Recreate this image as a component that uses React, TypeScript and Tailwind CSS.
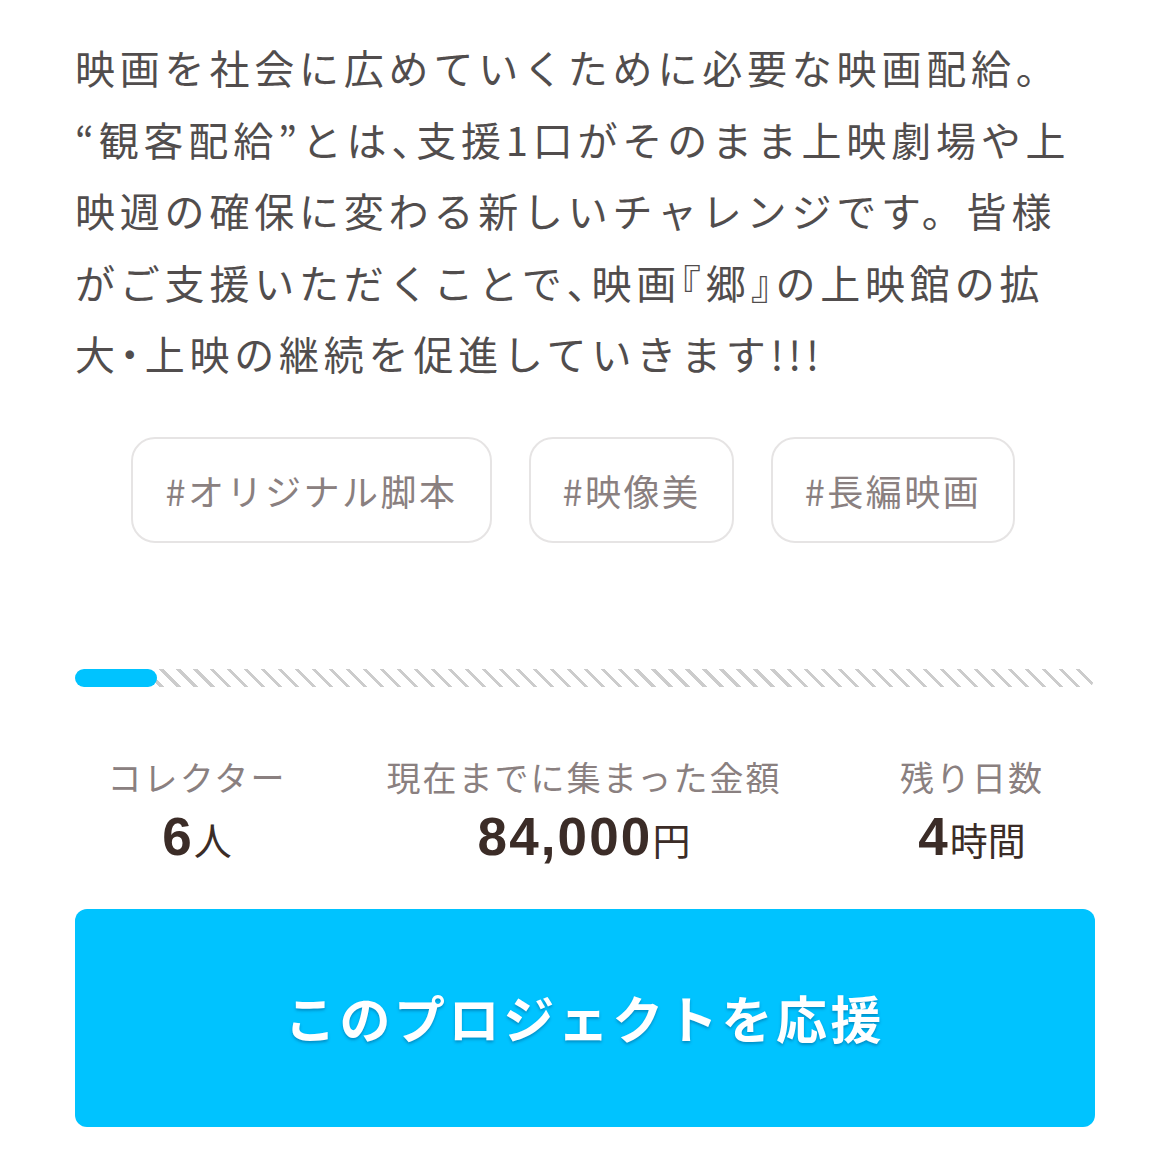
import type { ReactNode } from 'react';

// half-width punctuation, like the palt spacing in the shot
const P = ({ c }: { c: string }) => (
  <span className="[font-feature-settings:'halt']">{c}</span>
);

const lines: ReactNode[] = [
  '映画を社会に広めていくために必要な映画配給。',
  <>“観客配給”とは<P c="、" />支援1口がそのまま上映劇場や上</>,
  '映週の確保に変わる新しいチャレンジです。皆様',
  <>がご支援いただくことで<P c="、" />映画<P c="『" />郷<P c="』" />の上映館の拡</>,
  <>大<P c="・" />上映の継続を促進していきます!!!</>,
];

const tags = [
  { label: '#オリジナル脚本', w: 'w-[361px]' },
  { label: '#映像美', w: 'w-[205px]' },
  { label: '#長編映画', w: 'w-[244px]' },
];

export default function App() {
  return (
    <div className="w-[1170px] min-h-[1167px] bg-white px-[75px] pt-[32px] font-['Noto_Sans_CJK_JP',sans-serif]">
      {/* Description */}
      <p className="text-[40px] leading-[71.5px] tracking-[0.12em] text-[#514d4d] whitespace-nowrap">
        {lines.map((l, i) => (
          <span key={i} className="block">{l}</span>
        ))}
      </p>

      {/* Tags */}
      <div className="mt-[47px] ml-[56px] flex gap-[37px]">
        {tags.map((t) => (
          <div
            key={t.label}
            className={`${t.w} h-[106px] flex items-center justify-center rounded-[24px] border-2 border-[#e6e4e4] text-[36px] tracking-[0.07em] text-[#8a8080]`}
          >
            {t.label}
          </div>
        ))}
      </div>

      {/* Progress */}
      <div className="mt-[126px] h-[18px] rounded-full bg-[repeating-linear-gradient(45deg,#cccccc_0_3px,transparent_3px_12px)]">
        <div className="h-full w-[82px] rounded-full bg-[#00c3ff]" />
      </div>

      {/* Stats */}
      <div className="mt-[66px] grid grid-cols-[244px_1fr_246px] text-center">
        {[
          { label: 'コレクター', value: '6', unit: '人' },
          { label: '現在までに集まった金額', value: '84,000', unit: '円' },
          { label: '残り日数', value: '4', unit: '時間' },
        ].map((s) => (
          <div key={s.label} className="flex flex-col items-center">
            <span className="text-[34px] leading-[48px] tracking-[0.06em] text-[#8a8080]">{s.label}</span>
            <span className="mt-[6px] leading-[60px] text-[#3b2c27]">
              <span className="font-['Liberation_Sans',sans-serif] font-bold text-[53px] tracking-[0.04em]">{s.value}</span>
              <span className="text-[38px]">{s.unit}</span>
            </span>
          </div>
        ))}
      </div>

      {/* Button */}
      <button className="mt-[31px] mb-[41px] w-full h-[218px] rounded-[12px] bg-[#00c3ff] text-white font-bold text-[51px] tracking-[0.07em] [text-shadow:0_2px_3px_rgba(0,80,130,0.45)]">
        このプロジェクトを応援
      </button>
    </div>
  );
}
